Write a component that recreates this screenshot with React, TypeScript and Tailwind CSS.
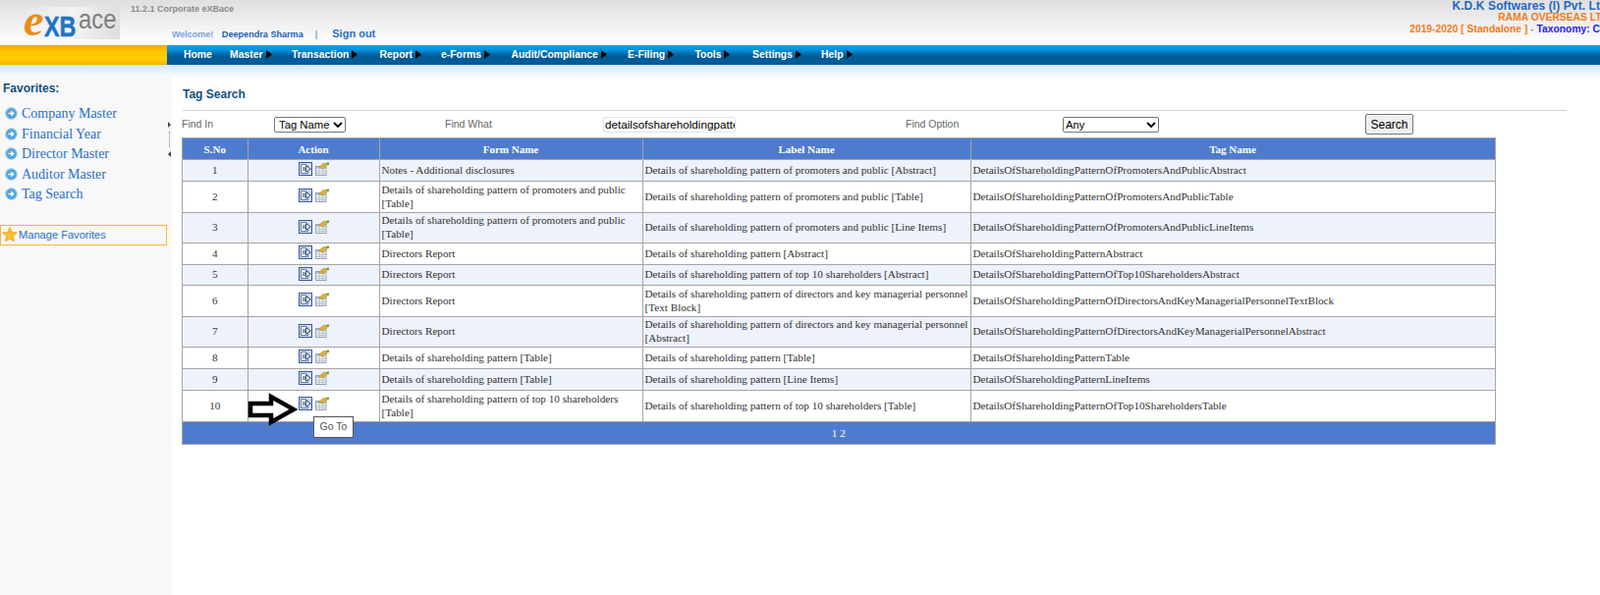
const SANS = "font-['Liberation_Sans',Arial,sans-serif]";

const rows = [
  ["1", "Notes - Additional disclosures", "Details of shareholding pattern of promoters and public [Abstract]", "DetailsOfShareholdingPatternOfPromotersAndPublicAbstract", "h-[22px]"],
  ["2", "Details of shareholding pattern of promoters and public [Table]", "Details of shareholding pattern of promoters and public [Table]", "DetailsOfShareholdingPatternOfPromotersAndPublicTable", "h-[32px]"],
  ["3", "Details of shareholding pattern of promoters and public [Table]", "Details of shareholding pattern of promoters and public [Line Items]", "DetailsOfShareholdingPatternOfPromotersAndPublicLineItems", "h-[31px]"],
  ["4", "Directors Report", "Details of shareholding pattern [Abstract]", "DetailsOfShareholdingPatternAbstract", "h-[22px]"],
  ["5", "Directors Report", "Details of shareholding pattern of top 10 shareholders [Abstract]", "DetailsOfShareholdingPatternOfTop10ShareholdersAbstract", "h-[21px]"],
  ["6", "Directors Report", "Details of shareholding pattern of directors and key managerial personnel [Text Block]", "DetailsOfShareholdingPatternOfDirectorsAndKeyManagerialPersonnelTextBlock", "h-[32px]"],
  ["7", "Directors Report", "Details of shareholding pattern of directors and key managerial personnel [Abstract]", "DetailsOfShareholdingPatternOfDirectorsAndKeyManagerialPersonnelAbstract", "h-[31px]"],
  ["8", "Details of shareholding pattern [Table]", "Details of shareholding pattern [Table]", "DetailsOfShareholdingPatternTable", "h-[22px]"],
  ["9", "Details of shareholding pattern [Table]", "Details of shareholding pattern [Line Items]", "DetailsOfShareholdingPatternLineItems", "h-[22px]"],
  ["10", "Details of shareholding pattern of top 10 shareholders [Table]", "Details of shareholding pattern of top 10 shareholders [Table]", "DetailsOfShareholdingPatternOfTop10ShareholdersTable", "h-[32px]"],
];

const favorites = ["Company Master", "Financial Year", "Director Master", "Auditor Master", "Tag Search"];
const menu = [
  ["Home", false, "w-[47px]"],
  ["Master", true, "w-[63px]"],
  ["Transaction", true, "w-[89.5px]"],
  ["Report", true, "w-[62.5px]"],
  ["e-Forms", true, "w-[71.5px]"],
  ["Audit/Compliance", true, "w-[118.5px]"],
  ["E-Filing", true, "w-[68.5px]"],
  ["Tools", true, "w-[58.5px]"],
  ["Settings", true, "w-[70px]"],
  ["Help", true, "w-[50px]"],
] as const;

function GoIcon() {
  return (
    <svg width="14" height="14" viewBox="0 0 14 14" className="shrink-0">
      <rect x="0.5" y="0.5" width="13" height="13" fill="#cfdcf1" stroke="#35599a" />
      <path d="M2.5 2.5H7.5L9.5 4.5V11.5H2.5z" fill="#f7f9fc" stroke="#5a6c88" strokeWidth="0.9" />
      <path d="M4 6h3.5M4 8h3.5" stroke="#27416c" strokeWidth="1" />
      <path d="M7.5 3.8L12.3 7 7.5 10.2z" fill="#ffffff" stroke="#27416c" strokeWidth="0.9" />
    </svg>
  );
}

function GridIcon() {
  return (
    <svg width="14" height="14" viewBox="0 0 14 14" className="shrink-0">
      <rect x="0.5" y="4.5" width="10.5" height="9" fill="#eef1f6" stroke="#94a3b8" />
      <rect x="1" y="5" width="9.5" height="2" fill="#b9c6d9" />
      <path d="M1 9.3h10M1 11.5h10M4.2 7v6.5M7.6 7v6.5" stroke="#a9b5c7" strokeWidth="0.7" />
      <path d="M3.5 5.5 8 1.5h5L11.5 4 8.5 7z" fill="#d9b23a" stroke="#a3852a" strokeWidth="0.5" />
      <path d="M11.5 0.5H14V3h-2.5z" fill="#6aa048" />
    </svg>
  );
}

function FavIcon() {
  return (
    <svg width="13" height="13" viewBox="0 0 13 13" className="shrink-0">
      <circle cx="6.5" cy="6.5" r="6.4" fill="#a9d2ee" />
      <circle cx="6.5" cy="6.5" r="5.2" fill="#4fa3dc" />
      <path d="M3.6 6.5h4.8M6.4 4.3l2.2 2.2-2.2 2.2" fill="none" stroke="#fff" strokeWidth="1.5" />
    </svg>
  );
}

function Caret() {
  return (
    <svg width="6" height="9" viewBox="0 0 6 9" className="ml-[3px] inline-block shrink-0">
      <path d="M0 0l6 4.5L0 9z" fill="#0a0a0a" />
    </svg>
  );
}

function Chevron() {
  return (
    <svg width="10" height="6" viewBox="0 0 10 6" className="pointer-events-none absolute right-[3px] top-[5px]">
      <path d="M1 1l4 4 4-4" fill="none" stroke="#111" strokeWidth="2" />
    </svg>
  );
}

export default function App() {
  return (
    <div className={`${SANS} relative flex h-[606px] w-[1629px] flex-col overflow-hidden bg-white`}>
      <header className="flex h-[46px] shrink-0 bg-gradient-to-b from-[#dfdfdf] to-[#ffffff]">
        <div className="w-[170px] shrink-0 pl-[24px] pt-[7px]">
          <div className="flex h-[33px] w-[98px] items-end bg-gradient-to-r from-transparent via-[#f3f3f3] to-[#dedede] leading-none">
            <span className="w-[21px] shrink-0 font-['Liberation_Serif',serif] text-[46px] font-bold italic leading-[38px] text-[#e98d16]">e</span>
            <span className="-mb-[2px] w-[32px] shrink-0 origin-left scale-x-[0.78] text-[30px] font-bold leading-[30px] text-[#1f74c4] [-webkit-text-stroke:0.5px_#1f74c4]">XB</span>
            <span className="mb-[6px] ml-[3px] w-[38px] shrink-0 origin-left scale-x-[0.85] text-[28px] leading-[28px] text-[#7a7d80]">ace</span>
          </div>
        </div>
        <div className="flex w-[300px] shrink-0 flex-col justify-between pb-[3px] pt-[3px]">
          <div className="-ml-[37px] text-[9px] font-bold text-[#8a8a8a]">11.2.1 Corporate eXBace</div>
          <div className="ml-[5px] flex items-baseline font-bold">
            <span className="text-[9px] text-[#7d9fd6]">Welcome!</span>
            <span className="ml-[8.5px] text-[9.1px] text-[#1a5fb4]">Deependra Sharma</span>
            <span className="ml-[12px] text-[9px] text-[#7d9fd6]">|</span>
            <span className="ml-[15px] text-[11px] text-[#2a6fc9]">Sign out</span>
          </div>
        </div>
        <div className="ml-auto flex flex-col items-end whitespace-nowrap font-bold leading-[12.2px]">
          <div className="-mr-[11px] text-[12px] tracking-[0.1px] text-[#1f66c4]">K.D.K Softwares (I) Pvt. Ltd.</div>
          <div className="-mr-[9px] text-[10.3px] text-[#f47b20]">RAMA OVERSEAS LTD</div>
          <div className="text-[10.3px]">
            <span className="text-[#f47b20]">2019-2020 [ Standalone ] </span>
            <span className="text-[#8a8a8a]">- </span>
            <span className="text-[#2222ee]">Taxonomy: C</span>
          </div>
        </div>
      </header>

      <nav className="flex h-[20px] shrink-0">
        <div className="w-[170px] shrink-0 bg-[linear-gradient(#f7a600_0%,#ffc400_30%,#ffd000_70%,#f9b000_100%)]" />
        <div className="flex flex-1 items-center bg-[linear-gradient(#0ea2ef_0%,#0a8fd8_25%,#005b97_55%,#005b97_100%)] pl-[17px] text-[10.4px] font-bold text-white">
          {menu.map(([label, caret, w]) => (
            <span key={label} className={`flex shrink-0 items-center ${w}`}>
              {label}
              {caret && <Caret />}
            </span>
          ))}
        </div>
      </nav>

      <div className="relative flex min-h-0 flex-1">
        <div className="pointer-events-none absolute inset-x-0 top-0 h-[14px] bg-gradient-to-b from-[#d5e6f7] to-[#ffffff00]" />
        <aside className="mt-[12px] w-[175px] shrink-0 bg-[#f8f8f8] pt-[5px]">
          <div className="pl-[3px] text-[12px] font-bold leading-[14px] text-[#13507f]">Favorites:</div>
          <ul className="mt-[10px] flex flex-col gap-[3.6px] pl-[5px] font-['Liberation_Serif',serif] text-[14px] leading-[17px] text-[#2a6fc9]">
            {favorites.map((f) => (
              <li key={f} className="flex items-center gap-[4px]">
                <FavIcon />
                {f}
              </li>
            ))}
          </ul>
          <div className="mt-[22.3px] flex h-[21px] w-[170px] items-center border border-[#f6b53c] text-[11.1px] text-[#2a6fc9]">
            <svg width="16" height="16" viewBox="0 0 16 16" className="ml-[1px] mr-[1px] shrink-0">
              <path d="M8 .8l2.2 4.7 5.1.6-3.8 3.5 1 5.1L8 12.2l-4.5 2.5 1-5.1L.7 6.1l5.1-.6z" fill="#fbc02d" stroke="#e69b1c" strokeWidth="0.8" />
            </svg>
            Manage Favorites
          </div>
        </aside>

        <div className="absolute left-[170px] top-[58px] flex h-[36px] w-[4px] flex-col items-center justify-between">
          <svg width="3" height="6" viewBox="0 0 3 6"><path d="M0 0l3 3-3 3z" fill="#444" /></svg>
          <div className="h-[16px] border-l border-dotted border-[#888]" />
          <svg width="3" height="6" viewBox="0 0 3 6"><path d="M3 0L0 3l3 3z" fill="#444" /></svg>
        </div>

        <main className="relative flex-1 pl-[11px] pr-[33px] pt-[23px]">
          <h1 className="text-[12px] font-bold leading-[14px] text-[#13507f]">Tag Search</h1>
          <div className="mt-[9px] h-px w-[1409px] bg-[#cfcfcf]" />
          <div className="-ml-px flex h-[27px] items-center text-[10.5px] text-[#666]">
            <span className="w-[94px]">Find In</span>
            <span className="relative block">
              <select defaultValue="Tag Name" className="block h-[16px] w-[73px] appearance-none rounded-[2px] border border-[#767676] bg-white pl-[4px] text-[11.3px] leading-[14px] text-black">
                <option>Tag Name</option>
              </select>
              <Chevron />
            </span>
            <span className="ml-[101px] w-[161px]">Find What</span>
            <input readOnly value="detailsofshareholdingpattern" className="h-[16px] w-[135px] rounded-[2px] border border-[#dbe3ee] bg-white pl-[1px] text-[11.7px] leading-[14px] text-black outline-none" />
            <span className="ml-[173px] w-[160px]">Find Option</span>
            <span className="relative block">
              <select defaultValue="Any" className="block h-[16px] w-[98px] appearance-none rounded-[2px] border border-[#767676] bg-white pl-[2px] text-[11.3px] leading-[14px] text-black">
                <option>Any</option>
              </select>
              <Chevron />
            </span>
            <button className="ml-[210px] h-[21px] w-[49px] rounded-[2px] border border-[#767676] bg-[#efefef] text-[12px] text-black">Search</button>
          </div>
          <table className="-ml-px w-[1337.5px] table-fixed border-collapse border border-[#a5a5a5] font-['Liberation_Serif',serif] text-[11.2px] leading-[14px] text-[#333]">
            <colgroup>
              <col className="w-[66.5px]" />
              <col className="w-[134px]" />
              <col className="w-[268px]" />
              <col className="w-[334px]" />
              <col />
            </colgroup>
            <thead>
              <tr className="h-[22px] bg-[#4f7bcf] text-[11px] font-bold text-white">
                {["S.No", "Action", "Form Name", "Label Name", "Tag Name"].map((h) => (
                  <th key={h} className="border border-[#a5a5a5] p-0 text-center font-bold">{h}</th>
                ))}
              </tr>
            </thead>
            <tbody>
              {rows.map(([n, form, label, tag, h], i) => (
                <tr key={n} className={`${h} ${i % 2 === 0 ? "bg-[#edf2fb]" : "bg-white"}`}>
                  <td className="border border-[#a5a5a5] p-0 pb-[2px] text-center">{n}</td>
                  <td className={`border border-[#a5a5a5] p-0 ${n === "10" ? "pb-[6px]" : "pb-[3px]"}`}>
                    <div className="flex items-center justify-center gap-[3px]">
                      <GoIcon />
                      <GridIcon />
                    </div>
                  </td>
                  <td className="border border-[#a5a5a5] pb-[2px] pl-[2px] pr-0 pt-0">{form}</td>
                  <td className="border border-[#a5a5a5] pb-[2px] pl-[2px] pr-0 pt-0">{label}</td>
                  <td className="border border-[#a5a5a5] pb-[2px] pl-[2px] pr-0 pt-0">{tag}</td>
                </tr>
              ))}
            </tbody>
            <tfoot>
              <tr className="h-[23px] bg-[#4f7bcf] text-white">
                <td colSpan={5} className="border border-[#a5a5a5] p-0 text-center">1 2</td>
              </tr>
            </tfoot>
          </table>

          <svg width="52" height="36" viewBox="0 0 52 36" className="absolute left-[76px] top-[333px]">
            <path d="M4 12h21V5l23 13-23 13v-7H4z" fill="#fff" stroke="#000" strokeWidth="4.5" />
          </svg>
          <div className="absolute left-[144px] top-[358px] flex h-[22px] w-[41px] items-center justify-center border border-[#555] bg-white text-[10.5px] text-[#555]">Go To</div>
        </main>
      </div>
    </div>
  );
}
